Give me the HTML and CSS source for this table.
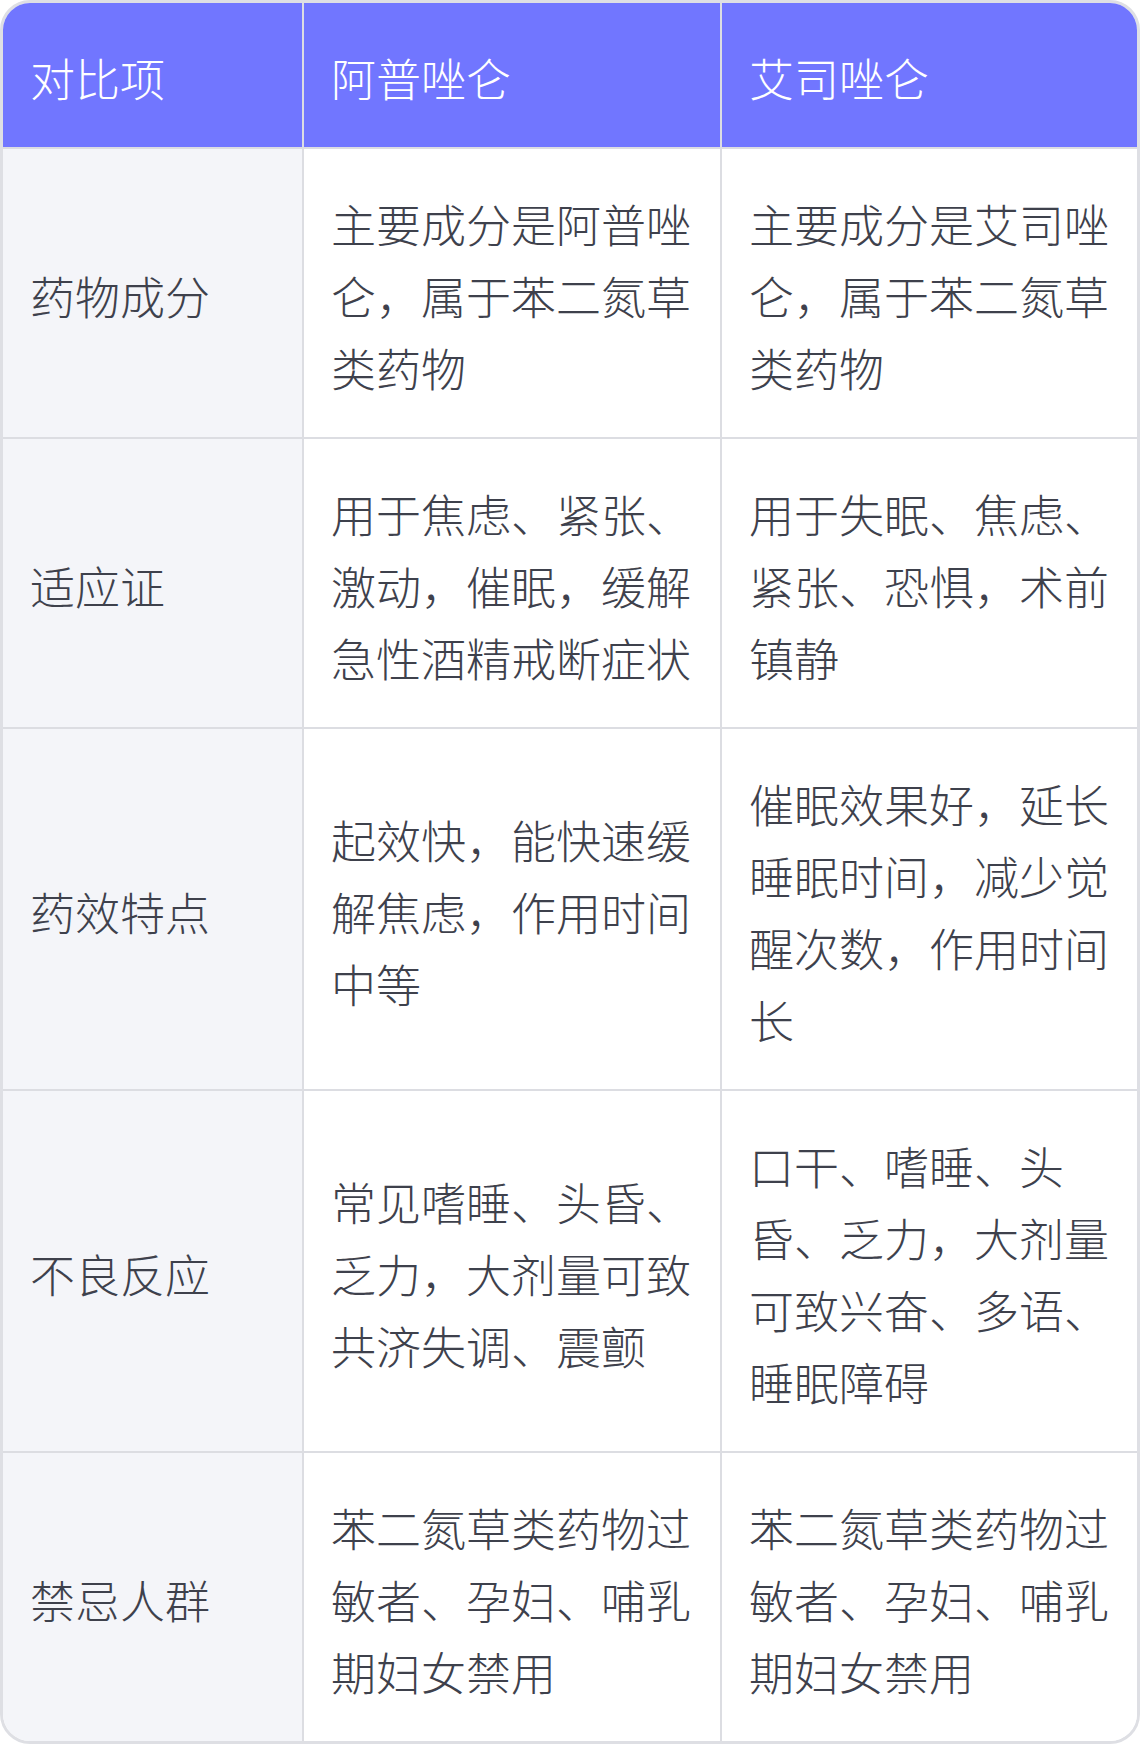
FILE: index.html
```html
<!DOCTYPE html>
<html lang="zh-CN">
<head>
<meta charset="utf-8">
<title>阿普唑仑 vs 艾司唑仑</title>
<link rel="stylesheet" href="styles.css">
</head>
<body>
<div class="table">
  <div class="cell head">对比项</div>
  <div class="cell head">阿普唑仑</div>
  <div class="cell head last-col">艾司唑仑</div>

  <div class="cell label">药物成分</div>
  <div class="cell">主要成分是阿普唑仑，属于苯二氮草类药物</div>
  <div class="cell last-col">主要成分是艾司唑仑，属于苯二氮草类药物</div>

  <div class="cell label">适应证</div>
  <div class="cell">用于焦虑、紧张、激动，催眠，缓解急性酒精戒断症状</div>
  <div class="cell last-col">用于失眠、焦虑、紧张、恐惧，术前镇静</div>

  <div class="cell label">药效特点</div>
  <div class="cell">起效快，能快速缓解焦虑，作用时间中等</div>
  <div class="cell last-col">催眠效果好，延长睡眠时间，减少觉醒次数，作用时间长</div>

  <div class="cell label">不良反应</div>
  <div class="cell">常见嗜睡、头昏、乏力，大剂量可致共济失调、震颤</div>
  <div class="cell last-col">口干、嗜睡、头昏、乏力，大剂量可致兴奋、多语、睡眠障碍</div>

  <div class="cell label last-row">禁忌人群</div>
  <div class="cell last-row">苯二氮草类药物过敏者、孕妇、哺乳期妇女禁用</div>
  <div class="cell last-col last-row">苯二氮草类药物过敏者、孕妇、哺乳期妇女禁用</div>
</div>
</body>
</html>
```
FILE: styles.css
```css
html, body {
  margin: 0;
  padding: 0;
  background: #ffffff;
}

body {
  font-family: "Noto Sans CJK SC", "Noto Sans", sans-serif;
}

.table {
  box-sizing: border-box;
  width: 1140px;
  display: grid;
  grid-template-columns: 301px 418px 415px;
  border: 3px solid #dedfe4;
  border-radius: 30px;
  overflow: hidden;
  background: #ffffff;
}

.cell {
  box-sizing: border-box;
  display: flex;
  align-items: center;
  padding: 39px 24px 33px 27px;
  font-size: 45px;
  font-weight: 300;
  line-height: 72px;
  color: #3e414c;
  border-right: 2px solid #dcdde2;
  border-bottom: 2px solid #dcdde2;
  background: #ffffff;
}

.cell.head {
  background: #7176ff;
  color: #ffffff;
}

.cell.label {
  background: #f4f5f9;
}

.cell.last-col {
  border-right: none;
}

.cell.last-row {
  border-bottom: none;
}
```
